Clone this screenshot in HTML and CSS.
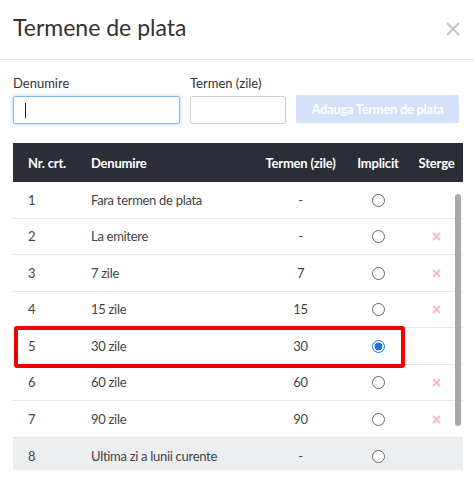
FILE: index.html
```html
<!DOCTYPE html>
<html lang="ro">
<head>
<meta charset="utf-8">
<title>Termene de plata</title>
<link rel="stylesheet" href="styles.css">
</head>
<body>
<div class="modal">
  <div class="modal-header">
    <h4 class="modal-title">Termene de plata</h4>
    <span class="close" aria-label="Inchide">
      <svg width="14" height="14" viewBox="0 0 14 14"><path d="M1 1L13 13M13 1L1 13" stroke="#c4c4c4" stroke-width="2" fill="none"/></svg>
    </span>
  </div>
  <div class="modal-body">
    <div class="form-row">
      <div class="field f-name">
        <label class="lbl">Denumire</label>
        <div class="input focused"><span class="caret"></span></div>
      </div>
      <div class="field f-days">
        <label class="lbl">Termen (zile)</label>
        <div class="input"></div>
      </div>
      <div class="btn-add">Adauga Termen de plata</div>
    </div>

    <div class="table">
      <div class="row thead">
        <div class="c c1">Nr. crt.</div>
        <div class="c c2">Denumire</div>
        <div class="c c3">Termen (zile)</div>
        <div class="c c4">Implicit</div>
        <div class="c c5">Sterge</div>
      </div>
      <div class="tbody">
        <div class="row">
          <div class="c c1">1</div><div class="c c2">Fara termen de plata</div><div class="c c3">-</div>
          <div class="c c4"><span class="radio"></span></div><div class="c c5"></div>
        </div>
        <div class="row">
          <div class="c c1">2</div><div class="c c2">La emitere</div><div class="c c3">-</div>
          <div class="c c4"><span class="radio"></span></div><div class="c c5"><span class="del"><svg width="9" height="9" viewBox="0 0 9 9"><path d="M1 1L8 8M8 1L1 8" stroke="#f6bcbc" stroke-width="2" fill="none"/></svg></span></div>
        </div>
        <div class="row">
          <div class="c c1">3</div><div class="c c2">7 zile</div><div class="c c3">7</div>
          <div class="c c4"><span class="radio"></span></div><div class="c c5"><span class="del"><svg width="9" height="9" viewBox="0 0 9 9"><path d="M1 1L8 8M8 1L1 8" stroke="#f6bcbc" stroke-width="2" fill="none"/></svg></span></div>
        </div>
        <div class="row">
          <div class="c c1">4</div><div class="c c2">15 zile</div><div class="c c3">15</div>
          <div class="c c4"><span class="radio"></span></div><div class="c c5"><span class="del"><svg width="9" height="9" viewBox="0 0 9 9"><path d="M1 1L8 8M8 1L1 8" stroke="#f6bcbc" stroke-width="2" fill="none"/></svg></span></div>
        </div>
        <div class="row">
          <div class="c c1">5</div><div class="c c2">30 zile</div><div class="c c3">30</div>
          <div class="c c4"><span class="radio checked"></span></div><div class="c c5"></div>
        </div>
        <div class="row">
          <div class="c c1">6</div><div class="c c2">60 zile</div><div class="c c3">60</div>
          <div class="c c4"><span class="radio"></span></div><div class="c c5"><span class="del"><svg width="9" height="9" viewBox="0 0 9 9"><path d="M1 1L8 8M8 1L1 8" stroke="#f6bcbc" stroke-width="2" fill="none"/></svg></span></div>
        </div>
        <div class="row">
          <div class="c c1">7</div><div class="c c2">90 zile</div><div class="c c3">90</div>
          <div class="c c4"><span class="radio"></span></div><div class="c c5"><span class="del"><svg width="9" height="9" viewBox="0 0 9 9"><path d="M1 1L8 8M8 1L1 8" stroke="#f6bcbc" stroke-width="2" fill="none"/></svg></span></div>
        </div>
        <div class="row hover">
          <div class="c c1">8</div><div class="c c2">Ultima zi a lunii curente</div><div class="c c3">-</div>
          <div class="c c4"><span class="radio"></span></div><div class="c c5"></div>
        </div>
        <div class="scrollbar"></div>
      </div>
      <div class="highlight"></div>
    </div>
  </div>
</div>
</body>
</html>
```

FILE: styles.css
```css
* { box-sizing: border-box; }
html, body {
  margin: 0;
  padding: 0;
  background: #fff;
}
body {
  font-family: Lato, "Open Sans", "Liberation Sans", sans-serif;
  font-size: 13px;
  color: #444;
}
.modal {
  width: 474px;
  height: 502px;
  overflow: hidden;
  background: #fff;
}
.modal-header {
  display: flex;
  align-items: flex-start;
  justify-content: space-between;
  padding: 14px 14px 19px 13px;
  border-bottom: 1px solid #e8e8e8;
  height: 60px;
}
.modal-title {
  margin: 0;
  font-size: 23px;
  font-weight: 400;
  line-height: 26px;
  color: #333;
}
.close {
  display: block;
  margin-top: 8px;
  width: 14px;
  height: 14px;
}
.close svg { display: block; }
.modal-body {
  padding: 14px 11px 0 13px;
}
.form-row {
  display: flex;
  align-items: flex-end;
  gap: 10px;
}
.field {
  display: flex;
  flex-direction: column;
}
.lbl {
  display: block;
  line-height: 18px;
  margin-bottom: 4px;
  color: #333;
}
.f-name { width: 167px; }
.f-days { width: 96px; }
.input {
  height: 28px;
  border: 1px solid #cfcfcf;
  border-radius: 2px;
  background: #fff;
  display: flex;
  align-items: center;
  padding-left: 11px;
}
.input.focused {
  border-color: #8ab8e6;
  box-shadow: 0 0 4px rgba(102, 175, 233, 0.55);
}
.caret {
  display: block;
  width: 1px;
  height: 15px;
  background: #222;
}
.btn-add {
  width: 163px;
  height: 28px;
  margin-bottom: 1px;
  background: #d3e2f8;
  color: #fff;
  font-weight: 700;
  border-radius: 2px;
  display: flex;
  align-items: center;
  justify-content: center;
  letter-spacing: -0.3px;
}
.table {
  position: relative;
  margin-top: 19px;
  width: 450px;
}
.row {
  display: grid;
  grid-template-columns: 65px 177px 91px 64px 53px;
  align-items: center;
  height: 36.5px;
  border-bottom: 1px solid #e6e6e6;
}
.tbody .row { letter-spacing: -0.3px; }
.thead {
  height: 39px;
  background: #2b2e36;
  color: #fff;
  font-weight: 700;
  border-bottom: none;
  letter-spacing: -0.2px;
}
.c1 { padding-left: 15px; }
.c2 { padding-left: 13px; white-space: nowrap; }
.c3, .c4, .c5 { text-align: center; }
.tbody {
  position: relative;
  height: 288px;
  overflow: hidden;
}
.row.hover {
  background: #eceef0;
  border-bottom: none;
}
.radio {
  display: inline-block;
  vertical-align: middle;
  width: 13px;
  height: 13px;
  border: 1px solid #666;
  border-radius: 50%;
  background: #fff;
  position: relative;
  top: -1px;
}
.radio.checked {
  border-color: #1a73e8;
  background: radial-gradient(circle, #1a73e8 0 3.6px, #fff 4.2px);
}
.del {
  display: inline-block;
  width: 9px;
  height: 9px;
  vertical-align: middle;
  position: relative;
  top: -1px;
}
.del svg { display: block; }
.scrollbar {
  position: absolute;
  top: 12px;
  right: 2px;
  width: 6px;
  height: 232px;
  border-radius: 3px;
  background: #a9a9ae;
}
.highlight {
  position: absolute;
  left: 1px;
  top: 183px;
  width: 391px;
  height: 42px;
  border: 4px solid #ee0000;
  border-radius: 3px;
  pointer-events: none;
}
```
